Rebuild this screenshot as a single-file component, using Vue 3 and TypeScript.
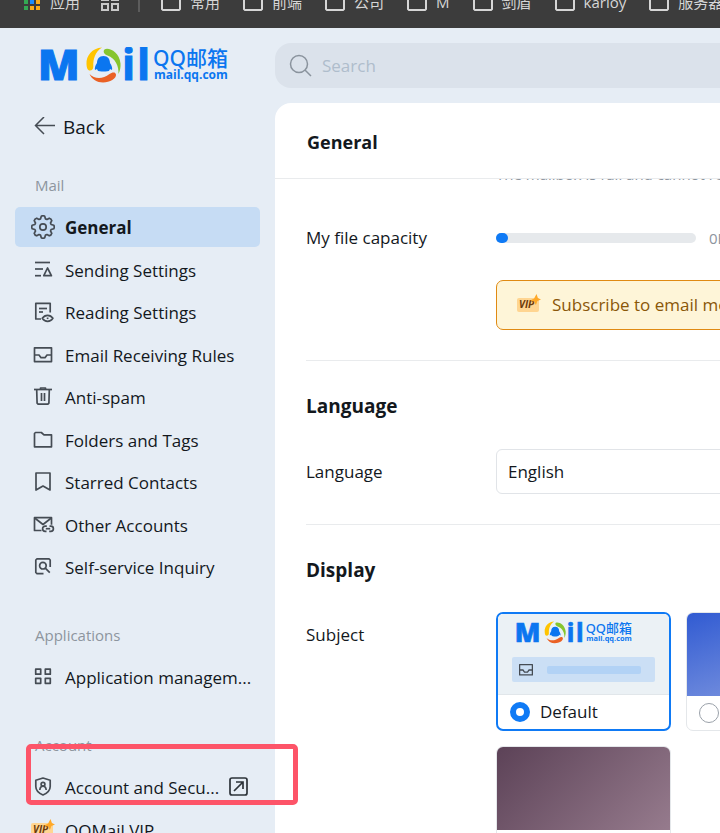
<script setup lang="ts">
import { h, ref } from 'vue'

interface NavItem {
  label: string
  icon: string
  external?: boolean
}

interface NavSection {
  title: string
  items: NavItem[]
  marked?: boolean
}

const icons: Record<string, string[]> = {
  gear: [
    'M10.300 1.200Q12 .2 13.700 1.200L14.500 3.900L16 4.500L18.300 3.200Q20.300 3.700 20.800 5.700L19.500 8L20.100 9.500L22.800 10.300Q23.800 12 22.800 13.700L20.100 14.500L19.500 16L20.800 18.300Q20.300 20.300 18.300 20.800L16 19.500L14.500 20.100L13.700 22.800Q12 23.800 10.300 22.800L9.500 20.100L8 19.500L5.700 20.800Q3.700 20.300 3.200 18.300L4.500 16L3.900 14.500L1.200 13.700Q.2 12 1.200 10.300L3.900 9.500L4.500 8L3.200 5.700Q3.700 3.700 5.700 3.200L8 4.500L9.500 3.900z',
    'M15.200 12a3.200 3.200 0 1 1-6.400 0 3.200 3.200 0 0 1 6.400 0z',
  ],
  sending: ['M4 4.500h15', 'M4 11h8', 'M4 17.700h6', 'M16.500 10l-3.700 7.700h7.600z'],
  reading: [
    'M10 19H4.800V3.300h14.400v9.200',
    'M8 8.500h8',
    'M8 12h4',
    'M11.300 18.300c2.600-4 8-4 10.600 0-2.600 4-8 4-10.600 0z',
    'M16.600 17.500v1.600',
  ],
  inbox: ['M3.500 4.800h17v13.800h-17z', 'M3.500 12h4.500l2 2.700h4l2-2.700h4.500'],
  trash: ['M3 4.500h18', 'M9.500 4.300V3h5v1.300', 'M5.700 4.700l.4 13.500 1 1h9.800l1-1 .4-13.500', 'M10.500 8v8', 'M13.500 8v8'],
  folder: ['M4.500 4.500h5.800l2.700 2.300h7.500v12H3.500V5.500z'],
  bookmark: ['M5 3h14v17l-7-4-7 4z'],
  linked: [
    'M10.500 17.500h-7V4.700h17v7',
    'M3.700 5l8.300 6.500L20.300 5',
    'M15.500 18.300h-1.300a2.600 2.600 0 0 1 0-5.200h1.600',
    'M18.500 13.100h1.300a2.600 2.600 0 0 1 0 5.200h-1.600',
    'M14.800 15.700h4.400',
  ],
  inquiry: ['M12.500 18.600H6l-1.200-1.200V5L6 3.800h12L19.200 5v7', 'M15.200 10.700a3.300 3.300 0 1 1-6.600 0 3.300 3.300 0 0 1 6.600 0z', 'M14.300 13.200l4.500 4.500'],
  apps: ['M4.700 4.200h5v5h-5z', 'M14.300 4.200h5v5h-5z', 'M4.700 13.300h5v5h-5z', 'M14.300 13.300h5v5h-5z'],
  shield: ['M12 3l7.200 2.200v6.300c0 3.900-2.900 6.600-7.200 8.500-4.300-1.900-7.200-4.600-7.200-8.500V5.200z', 'M13.900 9.200a1.900 1.900 0 1 1-3.800 0 1.900 1.900 0 0 1 3.800 0z', 'M8.800 15c.3-2.500 1.400-3.800 3.200-3.800s2.900 1.300 3.200 3.800'],
}

const sections: NavSection[] = [
  {
    title: 'Mail',
    items: [
      { label: 'General', icon: 'gear' },
      { label: 'Sending Settings', icon: 'sending' },
      { label: 'Reading Settings', icon: 'reading' },
      { label: 'Email Receiving Rules', icon: 'inbox' },
      { label: 'Anti-spam', icon: 'trash' },
      { label: 'Folders and Tags', icon: 'folder' },
      { label: 'Starred Contacts', icon: 'bookmark' },
      { label: 'Other Accounts', icon: 'linked' },
      { label: 'Self-service Inquiry', icon: 'inquiry' },
    ],
  },
  { title: 'Applications', items: [{ label: 'Application managem...', icon: 'apps' }] },
  {
    title: 'Account',
    marked: true,
    items: [
      { label: 'Account and Secu...', icon: 'shield', external: true },
      { label: 'QQMail VIP', icon: 'vip' },
    ],
  },
]

const bookmarks = ['常用', '前端', '公司', 'M', '剑盾', 'karloy', '服务器']
const appColors = ['#34a853', '#1a8cff', '#fbab18', '#34a853', '#1a8cff', '#fbab18', '#34a853', '#fbab18', '#fbab18']

const active = ref('General')
const theme = ref('default')
const language = ref('English')
const used = 6

// QQ Mail wordmark, shared by the sidebar and the theme preview
const Logo = () =>
  h('svg', { viewBox: '0 0 188 38', role: 'img', 'aria-label': 'QQ Mail' }, [
    h('g', { fill: '#0b76f0', 'font-family': '"Open Sans", sans-serif' }, [
      h('g', { stroke: '#0b76f0', 'stroke-width': 1, 'font-size': 43 }, [
        h('text', { x: -2, y: 33, 'font-weight': 800 }, 'M'),
        h('text', { x: 82, y: 33, 'font-weight': 700 }, 'i'),
        h('text', { x: 97, y: 33, 'font-weight': 700 }, 'l'),
      ]),
      h('text', { x: 113, y: 19, 'font-size': 21, 'font-weight': 500, 'font-family': '"Noto Sans", "Noto Sans CJK SC", sans-serif' }, 'QQ邮箱'),
      h('text', { x: 114, y: 32, 'font-size': 12, 'font-weight': 700 }, 'mail.qq.com'),
    ]),
    h('path', { fill: '#ffc400', d: 'M62 .5C52 1 46 9 46.500 17c.2 4 1 6.500 3.500 6.500 2 0 3.300-1.500 3.300-4C53 12 55 5 62 .5z' }),
    h('path', { fill: '#86c52d', d: 'M64.500 2.500c4-2.500 15 2.500 16 14 .3 4-.5 7-2 10.500.5-8-3-15.500-11-18.500-3-1-5-4-3-6z' }),
    h('path', { fill: '#ea6125', d: 'M49.500 27c5 5 13 5.500 20 0 2.500-2 6-2.500 6.500.5.500 4-6 8-13 8-6 0-11-3-13.500-8.500z' }),
    h('path', { fill: '#0b76f0', d: 'M63.500 9c-4.500 0-6.300 3-6.500 7-2 3-2.500 5-2 7l2-1c.3 1 .8 1.500 1.200 2l3.300.5h4l3.300-.5c.4-.5.9-1 1.200-2l2 1c.5-2 0-4-2-7-.2-4-2-7-6.500-7z' }),
  ])

const VipBadge = () =>
  h('svg', { viewBox: '0 0 24 24', 'aria-hidden': 'true' }, [
    h('rect', { x: 0, y: 5, width: 22, height: 14, rx: 2, fill: '#ffd591' }),
    h('text', { x: 2, y: 15, fill: '#6b3a0a', 'font-size': 10, 'font-weight': 700, 'font-style': 'italic', 'font-family': '"Open Sans", sans-serif' }, 'VIP'),
    h('path', { fill: '#ffa928', d: 'M19.500 1l1.400 4 3.100 1.600-3.600 1.500-1.500 4-1.800-3.500-4-1 4-2.200z' }),
  ])
</script>

<template>
  <div class="page">
    <nav class="bookmarks" aria-label="Bookmarks">
      <div class="bookmark-row">
        <a href="#" class="bookmark">
          <svg width="17" height="17" viewBox="0 0 17 17" aria-hidden="true">
            <rect v-for="(c, i) in appColors" :key="i" :x="(i % 3) * 6" :y="Math.floor(i / 3) * 6" width="4" height="4" :fill="c" />
          </svg>
          应用
        </a>
        <button class="grid-btn" aria-label="Tab groups">
          <svg width="18" height="18" viewBox="0 0 18 18" fill="none" stroke="#c9c9c9" stroke-width="2" aria-hidden="true">
            <path d="M1 1h6v6H1zM11 1h6v6h-6zM1 11h6v6H1zM11 11h6v6h-6z" />
          </svg>
        </button>
        <span class="separator"></span>
        <a v-for="b in bookmarks" :key="b" href="#" class="bookmark">
          <svg width="20" height="18" viewBox="0 0 20 18" fill="none" stroke="#d6d6d6" stroke-width="2" aria-hidden="true">
            <path d="M2 1h5l2 2h9l1 1v12l-1 1H2l-1-1V2z" />
          </svg>
          {{ b }}
        </a>
      </div>
    </nav>

    <div class="shell">
      <aside class="sidebar">
        <Logo class="logo" />
        <button class="back">
          <svg width="22" height="20" viewBox="0 0 22 20" fill="none" stroke="#454c54" stroke-width="1.500" aria-hidden="true">
            <path d="M10 0L1.500 8.500 10 17M1.500 8.500H21" />
          </svg>
          Back
        </button>
        <section v-for="s in sections" :key="s.title" class="section">
          <h2 class="section-title">{{ s.title }}</h2>
          <div class="nav-list" :class="{ long: s.items.length > 2, pair: s.items.length === 2 }">
            <a v-for="item in s.items" :key="item.label" href="#" class="nav-item" :class="{ active: item.label === active }" @click.prevent="active = item.label">
              <VipBadge v-if="item.icon === 'vip'" class="vip-icon" />
              <svg v-else class="nav-icon" viewBox="0 0 24 24" aria-hidden="true">
                <path v-for="d in icons[item.icon]" :key="d" :d="d" />
              </svg>
              <span class="nav-text">{{ item.label }}</span>
              <svg v-if="item.external" class="external" viewBox="0 0 20 20" aria-hidden="true">
                <rect x="1" y="1" width="17" height="17" rx="2" />
                <path d="M5 14L14 5M7 5h7v7" />
              </svg>
            </a>
          </div>
          <div v-if="s.marked" class="marker"></div>
        </section>
      </aside>

      <div class="workspace">
        <label class="search">
          <svg width="24" height="24" viewBox="0 0 24 24" fill="none" stroke="#8a939d" stroke-width="1.500" aria-hidden="true">
            <circle cx="10" cy="10" r="8.500" />
            <path d="M16 16l6 6" />
          </svg>
          <input type="search" placeholder="Search" aria-label="Search" />
        </label>

        <main class="panel">
          <header class="panel-head"><h1>General</h1></header>
          <div class="scroll">
            <p class="note">The mailbox is full and cannot receive mail</p>
            <div class="row capacity">
              <span class="row-label">My file capacity</span>
              <div class="bar"><div class="bar-fill" :style="{ width: used + '%' }"></div></div>
              <span class="amount">0B/2G</span>
            </div>
            <div class="row promo-row">
              <button class="promo"><VipBadge class="vip-icon" />Subscribe to email membership</button>
            </div>
            <section class="group">
              <h2>Language</h2>
              <div class="row language">
                <label class="row-label" for="language">Language</label>
                <select id="language" v-model="language">
                  <option>English</option>
                </select>
              </div>
            </section>
            <section class="group">
              <h2>Display</h2>
              <div class="row subject">
                <span class="row-label">Subject</span>
                <div class="themes">
                  <label class="theme" :class="{ chosen: theme === 'default' }">
                    <span class="preview light">
                      <Logo class="mini-logo" />
                      <span class="mini-row">
                        <svg class="mini-icon" viewBox="0 0 24 24" aria-hidden="true">
                          <path v-for="d in icons.inbox" :key="d" :d="d" />
                        </svg>
                        <span class="mini-bar"></span>
                      </span>
                    </span>
                    <span class="choice"><input v-model="theme" type="radio" name="theme" value="default" />Default</span>
                  </label>
                  <label class="theme">
                    <span class="preview blue"></span>
                    <span class="choice"><input v-model="theme" type="radio" name="theme" value="blue" aria-label="Blue" /></span>
                  </label>
                  <label class="theme">
                    <span class="preview plum"></span>
                    <span class="choice"><input v-model="theme" type="radio" name="theme" value="plum" aria-label="Plum" /></span>
                  </label>
                </div>
              </div>
            </section>
          </div>
        </main>
      </div>
    </div>
  </div>
</template>

<style>
body {
  background: #e6edf5;
}
</style>

<style scoped>
* {
  box-sizing: border-box;
}
.page {
  display: flex;
  flex-direction: column;
  height: 100vh;
  overflow: hidden;
  color: #13181d;
  background: #e6edf5;
  font-family: 'Open Sans', 'Noto Sans CJK SC', sans-serif;
  font-size: 17px;
  line-height: 24px;
}
a {
  color: inherit;
  text-decoration: none;
}
button,
input,
select {
  font: inherit;
  color: inherit;
}
button {
  padding: 0;
  border: 0;
  background: none;
}
h1,
h2,
p {
  margin: 0;
}
.bookmarks {
  flex: none;
  height: 28px;
  overflow: hidden;
  background: #3c3c3c;
}
.bookmark-row {
  display: flex;
  align-items: center;
  gap: 23px;
  height: 40px;
  margin-top: -18px;
  padding-left: 24px;
  color: #d6d6d6;
  font-size: 15px;
  white-space: nowrap;
}
.bookmark {
  display: flex;
  flex: none;
  align-items: center;
  gap: 9px;
}
.grid-btn {
  display: flex;
  flex: none;
  margin: 0 -2px;
}
.separator {
  flex: none;
  width: 2px;
  height: 20px;
  margin: 0 -2px;
  background: #5c5c5c;
}
.shell {
  display: flex;
  flex: 1;
  min-height: 0;
}
.sidebar {
  position: relative;
  z-index: 1;
  flex: none;
  width: 275px;
  padding: 19px 15px 0;
}
.logo {
  display: block;
  width: 188px;
  height: 38px;
  margin-left: 25px;
}
.back {
  display: flex;
  align-items: center;
  gap: 7px;
  height: 28px;
  margin: 28px 0 34px 19px;
  font-size: 19px;
}
.section {
  position: relative;
  margin-bottom: 38px;
}
.section-title {
  margin: 0 0 12px 20px;
  color: #8d959e;
  font-size: 15px;
  font-weight: 400;
  line-height: 20px;
}
.nav-list {
  display: grid;
  align-content: space-between;
}
.long {
  height: 380px;
}
.pair {
  height: 83px;
}
.nav-item {
  display: flex;
  align-items: center;
  gap: 10px;
  height: 40px;
  padding-left: 16px;
  border-radius: 5px;
  white-space: nowrap;
}
.nav-text {
  padding-top: 2px;
}
.active {
  background: #c6dcf4;
}
.active .nav-text {
  font-weight: 700;
}
.nav-icon,
.vip-icon {
  flex: none;
  width: 24px;
  height: 24px;
}
.nav-icon path,
.mini-icon path {
  fill: none;
  stroke: #454c54;
  stroke-width: 1.7;
  stroke-linejoin: round;
}
.external {
  width: 20px;
  height: 20px;
  fill: none;
  stroke: #2d3339;
  stroke-width: 1.7;
}
.marker {
  position: absolute;
  top: 9px;
  left: 11px;
  width: 272px;
  height: 61px;
  border: 5px solid #fd5468;
  border-radius: 5px;
  pointer-events: none;
}
.workspace {
  display: flex;
  flex: 1;
  flex-direction: column;
  gap: 15px;
  min-width: 0;
  padding-top: 15px;
}
.search {
  display: flex;
  flex: none;
  align-items: center;
  gap: 9px;
  height: 45px;
  padding-left: 14px;
  border-radius: 16px 0 0 16px;
  background: #dbe2eb;
}
.search input {
  flex: 1;
  min-width: 0;
  padding: 0;
  border: 0;
  outline: 0;
  background: none;
}
.search input::placeholder {
  color: #afbdcc;
}
.panel {
  display: flex;
  flex: 1;
  flex-direction: column;
  min-height: 0;
  overflow: hidden;
  border-radius: 16px 0 0 0;
  background: #fff;
}
.panel-head {
  display: flex;
  flex: none;
  align-items: center;
  height: 76px;
  padding: 2px 0 0 32px;
  border-bottom: 1px solid #e9ebed;
}
h1,
.group h2 {
  font-size: 19px;
  font-weight: 700;
  line-height: 24px;
}
h1 {
  font-size: 18px;
}
.scroll {
  flex: 1;
  min-height: 0;
  padding-left: 31px;
  overflow: hidden;
}
.note {
  margin: -17px 0 0 190px;
  color: #8d959e;
  font-size: 15px;
  line-height: 24px;
  white-space: nowrap;
}
.row {
  display: flex;
  white-space: nowrap;
}
.row-label {
  flex: none;
  width: 190px;
}
.capacity {
  align-items: center;
  height: 24px;
  margin-top: 40px;
}
.bar {
  flex: none;
  width: 200px;
  height: 10px;
  margin-right: 13px;
  border-radius: 5px;
  background: #e6e9ec;
}
.bar-fill {
  height: 10px;
  border-radius: 5px;
  background: #0f7af5;
}
.amount {
  color: #8d959e;
  font-size: 15px;
}
.promo-row {
  margin: 30px 0;
  padding-left: 190px;
}
.promo {
  display: flex;
  flex: none;
  align-items: center;
  gap: 11px;
  height: 50px;
  padding: 0 20px;
  border: 1px solid #e08a13;
  border-radius: 7px;
  background: #fef5d8;
  color: #8a5708;
}
.group {
  padding-bottom: 30px;
  border-top: 1px solid #e9ebed;
}
.group h2 {
  margin-top: 33px;
}
.language {
  align-items: center;
  margin-top: 31px;
}
select {
  flex: none;
  width: 400px;
  height: 45px;
  padding: 0 11px;
  border: 1px solid #e1e4e8;
  border-radius: 6px;
  background: #fff;
  appearance: none;
}
.subject {
  margin-top: 30px;
}
.subject .row-label {
  line-height: 46px;
}
.themes {
  display: grid;
  flex: none;
  grid-template-columns: 175px 175px;
  gap: 15px;
}
.theme {
  display: flex;
  flex-direction: column;
  height: 119px;
  overflow: hidden;
  border: 1px solid #e4e7ea;
  border-radius: 7px;
}
.chosen {
  border: 2px solid #0f7af5;
}
.preview {
  flex: 1;
}
.light {
  padding: 7px 14px 0;
  border-bottom: 1px solid #e1e6ea;
  background: #ebf1f5;
}
.blue {
  background: linear-gradient(160deg, #315bd2, #8da2e2);
}
.plum {
  background: linear-gradient(135deg, #5c4257, #967b8d);
}
.mini-logo {
  display: block;
  width: 116px;
  height: 24px;
  margin-left: 4px;
}
.mini-row {
  display: flex;
  align-items: center;
  gap: 12px;
  height: 25px;
  margin-top: 12px;
  padding: 0 14px 0 5px;
  border-radius: 2px;
  background: #cbdff5;
}
.mini-icon {
  width: 18px;
  height: 18px;
}
.mini-bar {
  flex: 1;
  height: 8px;
  border-radius: 2px;
  background: #b2d2f5;
}
.choice {
  display: flex;
  flex: none;
  align-items: center;
  gap: 10px;
  height: 34px;
  padding-left: 12px;
}
.choice input {
  flex: none;
  width: 20px;
  height: 20px;
  margin: 0;
  border: 1px solid #9aa1a9;
  border-radius: 50%;
  background: #fff;
  appearance: none;
}
.choice input:checked {
  border: 6px solid #0f7af5;
}
</style>
